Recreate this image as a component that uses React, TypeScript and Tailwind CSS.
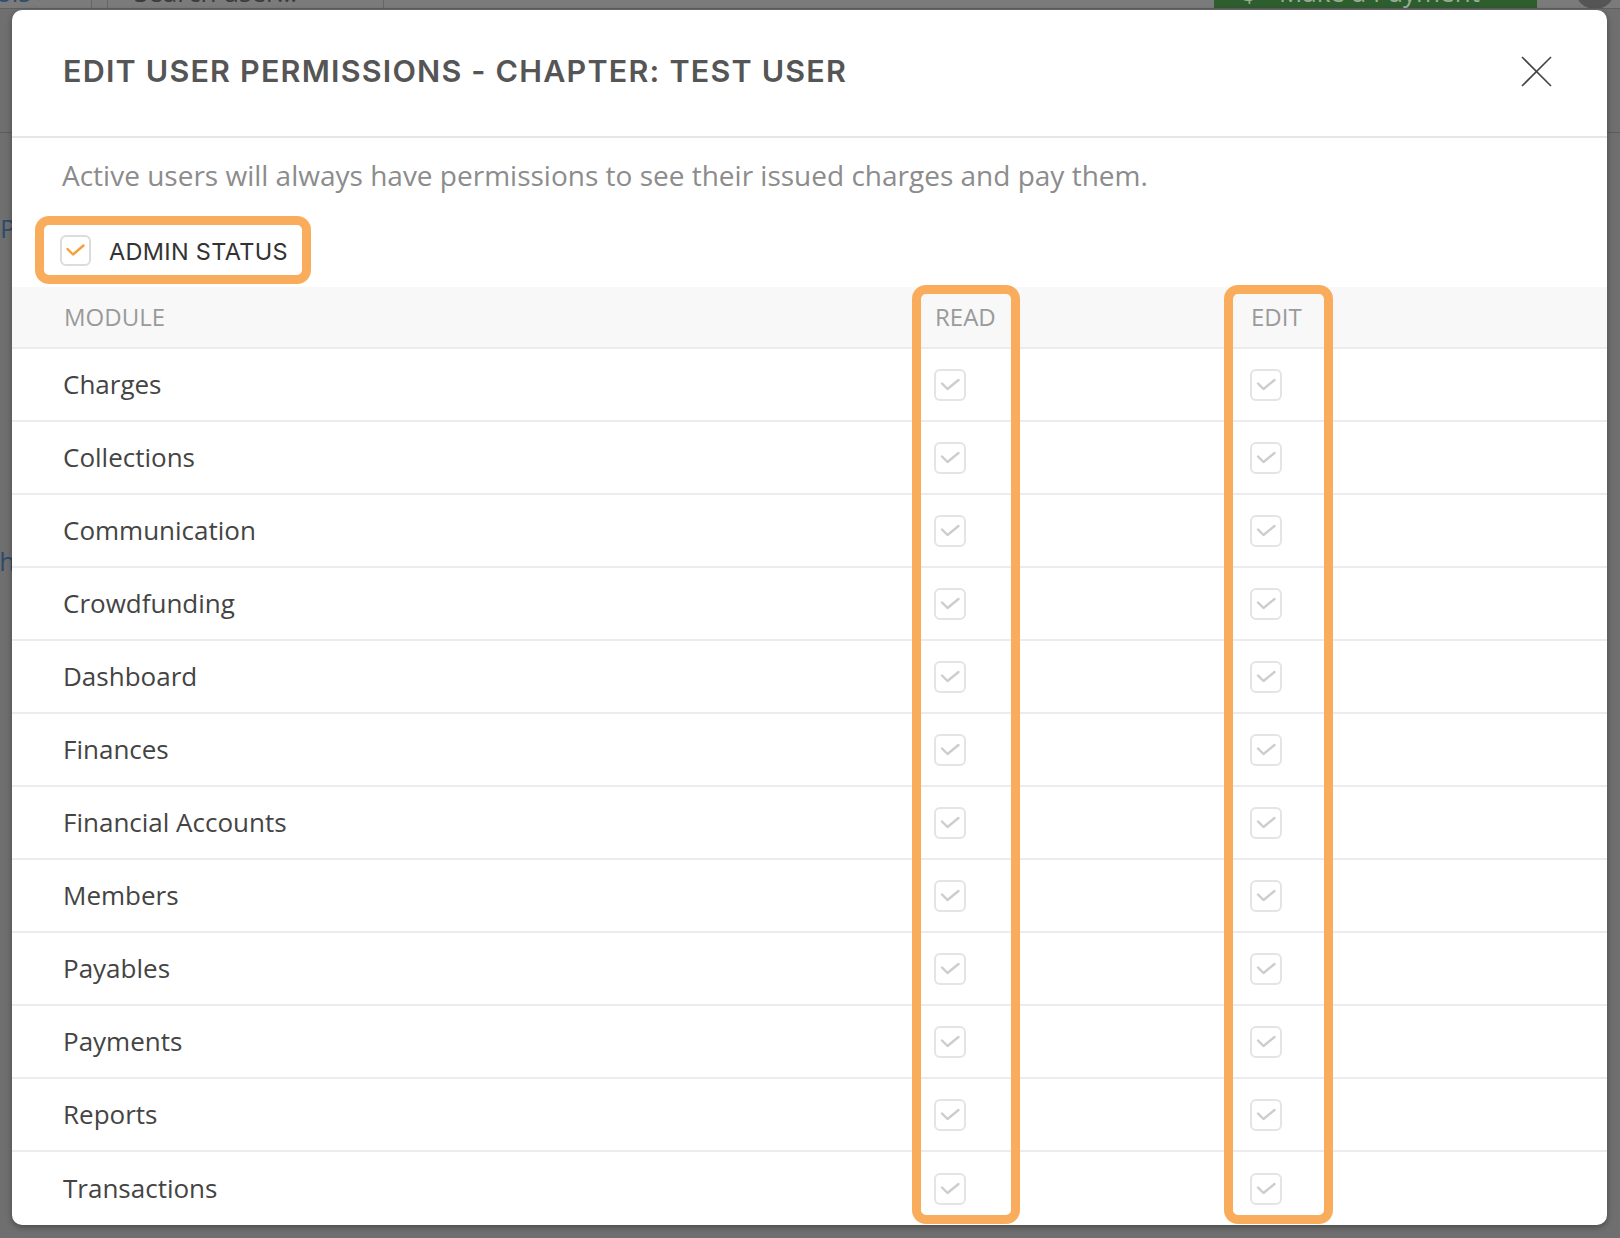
import React from 'react';

const modules = [
  'Charges',
  'Collections',
  'Communication',
  'Crowdfunding',
  'Dashboard',
  'Finances',
  'Financial Accounts',
  'Members',
  'Payables',
  'Payments',
  'Reports',
  'Transactions',
];

function GrayBox() {
  return (
    <span className="flex h-[32px] w-[32px] items-center justify-center rounded-[6px] border-2 border-[#e4e4e4] bg-white">
      <svg width="20" height="13" viewBox="0 0 20 13" fill="none">
        <polyline points="2,5.5 7.5,11 18.5,2" stroke="#cdcdcd" strokeWidth="2.4" strokeLinecap="round" strokeLinejoin="round" />
      </svg>
    </span>
  );
}

export default function App() {
  return (
    <div className="relative h-[1238px] w-[1620px] overflow-hidden bg-[#6f6f6f] font-['Open_Sans',sans-serif]">
      {/* page behind the overlay */}
      <div className="h-[9px] overflow-hidden border-b border-[#5f5f5f] bg-[#7b7b7b]">
        <div className="-mt-[24px] flex h-[33px] items-end text-[26px] leading-[33px]">
          <span className="-ml-[4px] w-[95px] text-[#2d4b6b]">ols ›</span>
          <span className="h-full w-[17px] border-x border-[#666]" />
          <span className="w-[275px] pl-[26px] text-[#3a3a3a]">Search user...</span>
          <span className="h-full border-l border-[#666]" />
          <span className="ml-[830px] flex h-full w-[323px] items-end gap-[22px] bg-[#2e5d2e] pl-[28px] text-[#97ad97]">
            <span>$</span>
            <span>Make a Payment</span>
          </span>
          <span className="ml-[38px] h-[40px] w-[40px] rounded-full bg-[#555]" />
        </div>
      </div>
      <div className="flex flex-col text-[26px] text-[#2d4b6b]">
        <div className="h-[124px] border-b border-[#5c5c5c]" />
        <div className="mt-[76px]">Payments</div>
        <div className="-ml-[44px] mt-[294px]">Cash</div>
      </div>

      {/* modal */}
      <div className="absolute left-[12px] top-[10px] flex h-[1215px] w-[1595px] flex-col overflow-hidden rounded-[10px] bg-white shadow-[0_2px_6px_rgba(0,0,0,0.35)]">
        <div className="flex h-[128px] shrink-0 items-center justify-between border-b-2 border-[#e6e6e6] pb-[4px] pl-[51px] pr-[55px]">
          <h1 className="font-['Inter',sans-serif] text-[30.5px] font-semibold leading-none tracking-[1.2px] text-[#555]">
            EDIT USER PERMISSIONS - CHAPTER: TEST USER
          </h1>
          <svg width="31" height="31" viewBox="0 0 31 31" fill="none">
            <line x1="1" y1="1" x2="30" y2="30" stroke="#444" strokeWidth="1.6" />
            <line x1="30" y1="1" x2="1" y2="30" stroke="#444" strokeWidth="1.6" />
          </svg>
        </div>

        <p className="pl-[50px] pt-[18px] text-[28px] leading-[38px] text-[#8c8c8c]">
          Active users will always have permissions to see their issued charges and pay them.
        </p>

        <div className="ml-[23px] mt-[22px] flex h-[68px] w-fit items-center gap-[18px] rounded-[14px] border-[9px] border-[#f9ad5c] pl-[16px] pr-[14px] pt-[4px]">
          <span className="-mt-[4px] flex h-[31px] w-[31px] items-center justify-center rounded-[6px] border-2 border-[#dcdcdc] bg-white">
            <svg width="19" height="12" viewBox="0 0 19 12" fill="none">
              <polyline points="1.5,5 7,10.5 17.5,1.5" stroke="#f5a03a" strokeWidth="2.4" strokeLinecap="round" strokeLinejoin="round" />
            </svg>
          </span>
          <span className="font-['Inter',sans-serif] text-[23.5px] font-normal tracking-[0.3px] text-[#333]">ADMIN STATUS</span>
        </div>

        <div className="relative mt-[3px]">
          <div className="flex h-[62px] items-center border-b-2 border-[#ececec] bg-[#f8f8f8] text-[24px] text-[#9a9a9a]">
            <div className="w-[922px] pl-[52px]">MODULE</div>
            <div className="w-[316px] pl-[1px]">READ</div>
            <div className="flex-1 pl-[1px]">EDIT</div>
          </div>
          {modules.map((m, i) => (
            <div
              key={m}
              className={`flex h-[73px] items-center text-[26px] text-[#444] ${i < modules.length - 1 ? 'border-b-2 border-[#ececf0]' : ''}`}
            >
              <div className="w-[922px] pl-[51px]">{m}</div>
              <div className="w-[316px]">
                <GrayBox />
              </div>
              <div className="flex-1">
                <GrayBox />
              </div>
            </div>
          ))}

          {/* highlight outlines over the READ and EDIT columns */}
          <div className="pointer-events-none absolute -top-[2px] bottom-[1px] left-[900px] w-[108px] rounded-[14px] border-[9px] border-[#f9ad5c]" />
          <div className="pointer-events-none absolute -top-[2px] bottom-[1px] left-[1212px] w-[109px] rounded-[14px] border-[9px] border-[#f9ad5c]" />
        </div>
      </div>
    </div>
  );
}
